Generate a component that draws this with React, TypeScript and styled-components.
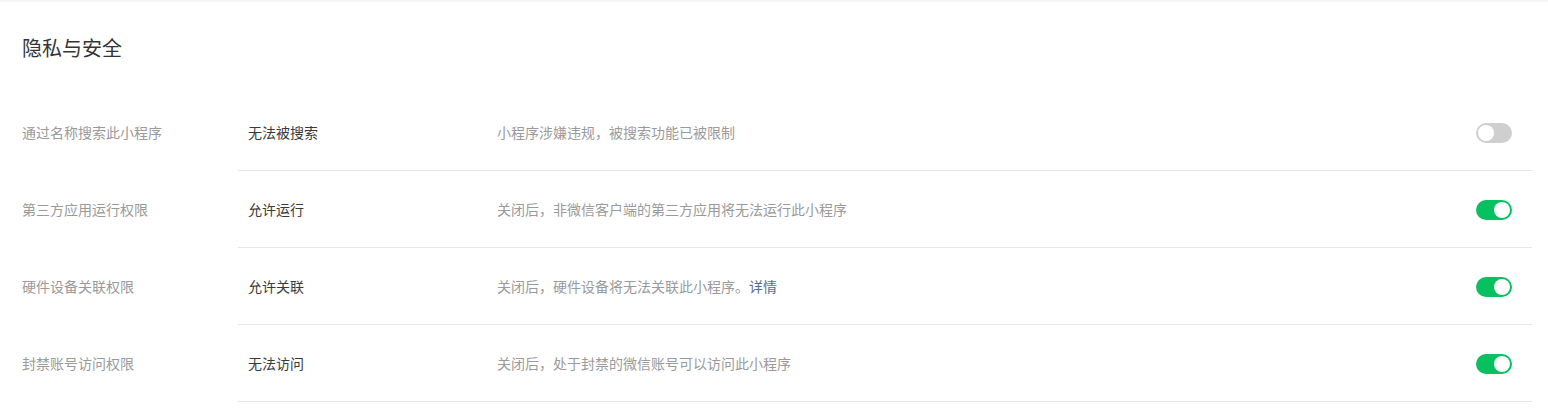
import React, { useState } from "react";
import styled, { createGlobalStyle } from "styled-components";

const GlobalStyle = createGlobalStyle`
  html, body { margin: 0; padding: 0; background: #fff; }
  body {
    font-family: "Noto Sans CJK SC", "Noto Sans", sans-serif;
    -webkit-font-smoothing: antialiased;
  }
`;

const Page = styled.div`
  width: 1548px;
  background: #fff;
  border-top: 2px solid #f6f6f6;
`;

const Header = styled.div`
  padding: 32px 22px 32px;
`;

const Title = styled.h2`
  margin: 0;
  font-size: 20px;
  line-height: 28px;
  font-weight: 400;
  color: #353535;
`;

const List = styled.div`
  display: flex;
  flex-direction: column;
  padding: 0 16px 0 22px;
`;

const Row = styled.div`
  display: flex;
  align-items: stretch;
  height: 77px;
`;

const Label = styled.div`
  width: 216px;
  flex: none;
  display: flex;
  align-items: center;
  font-size: 14px;
  color: #9a9a9a;
  border-bottom: 1px solid transparent;
`;

const Content = styled.div`
  flex: 1;
  display: flex;
  align-items: center;
  padding: 0 20px 0 10px;
  border-bottom: 1px solid #e7e7eb;
`;

const Value = styled.div`
  width: 249px;
  flex: none;
  font-size: 14px;
  color: #3a3a3a;
`;

const Desc = styled.div`
  flex: 1;
  font-size: 14px;
  color: #9a9a9a;
`;

const Link = styled.a`
  color: #576b95;
  text-decoration: none;
  cursor: pointer;
`;

const Switch = styled.button<{ $on: boolean }>`
  position: relative;
  flex: none;
  width: 36px;
  height: 20px;
  margin-top: 1px;
  padding: 0;
  border: none;
  border-radius: 10px;
  background: ${(p) => (p.$on ? "#07c160" : "#cfcfcf")};
  cursor: pointer;
  &::after {
    content: "";
    position: absolute;
    top: 2px;
    left: ${(p) => (p.$on ? "18px" : "2px")};
    width: 16px;
    height: 16px;
    border-radius: 50%;
    background: #fff;
    transition: left 0.2s;
  }
`;

type Item = {
  label: string;
  value: string;
  desc: string;
  link?: string;
  on: boolean;
};

const items: Item[] = [
  { label: "通过名称搜索此小程序", value: "无法被搜索", desc: "小程序涉嫌违规，被搜索功能已被限制", on: false },
  { label: "第三方应用运行权限", value: "允许运行", desc: "关闭后，非微信客户端的第三方应用将无法运行此小程序", on: true },
  { label: "硬件设备关联权限", value: "允许关联", desc: "关闭后，硬件设备将无法关联此小程序。", link: "详情", on: true },
  { label: "封禁账号访问权限", value: "无法访问", desc: "关闭后，处于封禁的微信账号可以访问此小程序", on: true },
];

export default function App() {
  const [states, setStates] = useState(items.map((i) => i.on));
  return (
    <>
      <GlobalStyle />
      <Page>
        <Header>
          <Title>隐私与安全</Title>
        </Header>
        <List>
          {items.map((it, i) => (
            <Row key={it.label}>
              <Label>{it.label}</Label>
              <Content>
                <Value>{it.value}</Value>
                <Desc>
                  {it.desc}
                  {it.link && <Link>{it.link}</Link>}
                </Desc>
                <Switch
                  $on={states[i]}
                  aria-label={it.label}
                  onClick={() => setStates((s) => s.map((v, j) => (j === i ? !v : v)))}
                />
              </Content>
            </Row>
          ))}
        </List>
      </Page>
    </>
  );
}
